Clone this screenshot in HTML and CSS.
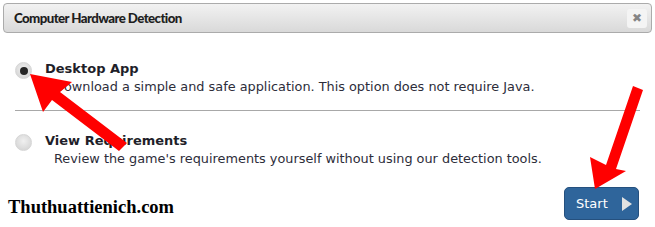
FILE: index.html
```html
<!DOCTYPE html>
<html>
<head>
<meta charset="utf-8">
<link rel="stylesheet" href="styles.css">
</head>
<body>
<div class="page">
  <div class="header">
    <span class="title">Computer Hardware Detection</span>
    <span class="close">&#x2716;</span>
  </div>
  <div class="options">
    <div class="option">
      <span class="radio checked"><span class="dot"></span></span>
      <div class="opt-text">
        <div class="opt-title">Desktop App</div>
        <div class="opt-desc">Download a simple and safe application. This option does not require Java.</div>
      </div>
    </div>
    <div class="sep"></div>
    <div class="option second">
      <span class="radio"></span>
      <div class="opt-text">
        <div class="opt-title">View Requirements</div>
        <div class="opt-desc">Review the game's requirements yourself without using our detection tools.</div>
      </div>
    </div>
  </div>
  <div class="footer">
    <span class="brand">Thuthuattienich.com</span>
    <button class="start">Start <span class="tri"></span></button>
  </div>
  <svg class="arrows" width="655" height="227" viewBox="0 0 655 227">
    <polygon fill="#ff0000" points="30,74 72,82 60,92 127,143 119,151 52,100 43,112"/>
    <polygon fill="#ff0000" points="595,189 590,157 606,165 633,86 643,90 616,169 626,171"/>
  </svg>
</div>
</body>
</html>
```
FILE: styles.css
```css
html, body { margin: 0; padding: 0; background: #fff; }
.page { position: relative; width: 655px; height: 227px; overflow: hidden; }
.header {
  margin: 3px 3px 0 3px;
  height: 28px;
  border: 1px solid #ababab;
  border-radius: 4px;
  background: linear-gradient(#f2f2f2, #d9d9d9);
  display: flex; align-items: center; justify-content: space-between;
  padding: 0 4px 0 10px;
}
.title { font-family: "Lato", sans-serif; font-weight: 900; font-size: 13.3px; letter-spacing: -0.6px; color: #1e1e1e; }
.close {
  width: 20px; height: 19px; background: #f4f4f4; border-radius: 3px;
  color: #858585; font-size: 12px; display: flex; align-items: center; justify-content: center;
  font-family: "DejaVu Sans", sans-serif;
}
.options { padding: 28px 15px 0 15px; }
.option { display: flex; align-items: flex-start; }
.radio {
  width: 17px; height: 17px; border-radius: 50%;
  background: radial-gradient(circle at 50% 40%, #f0f0f0, #cfcfcf);
  border: 1px solid #d6d6d6;
  box-sizing: border-box;
  margin-top: 1px; margin-right: 13px;
  display: flex; align-items: center; justify-content: center; flex: none;
}
.dot { width: 8px; height: 8px; border-radius: 50%; background: #262626; }
.opt-text { font-family: "DejaVu Sans", Verdana, sans-serif; }
.opt-title { font-weight: bold; font-size: 13px; color: #1f1f2a; line-height: 16px; }
.opt-desc { font-size: 12.85px; color: #2d2d3a; line-height: 19px; padding-left: 9px; }
.sep { height: 1px; background: #a8a8a8; margin: 14px 0 22px 0; }
.footer { display: flex; justify-content: space-between; align-items: flex-start; padding: 19px 16px 0 8px; }
.brand { font-family: "Liberation Serif", serif; font-weight: bold; font-size: 18.5px; color: #000; margin-top: 10px; }
.start {
  width: 75px; height: 33px; border: 1px solid #25507e; border-radius: 5px;
  background: #2f659b; color: #fff; font-family: "DejaVu Sans", Verdana, sans-serif;
  font-size: 13px; display: flex; align-items: center; padding: 0 6px 0 11px;
  justify-content: space-between;
}
.tri { width: 0; height: 0; border-top: 7px solid transparent; border-bottom: 7px solid transparent; border-left: 10px solid #e2e2e2; }
.arrows { position: absolute; left: 0; top: 0; pointer-events: none; }
```
